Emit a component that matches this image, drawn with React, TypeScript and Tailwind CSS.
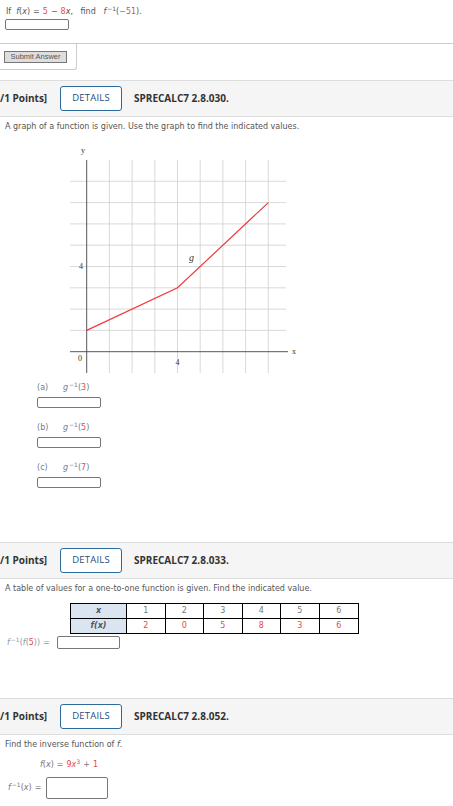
const body = "font-['DejaVu_Sans',Verdana,sans-serif] text-[8px] text-[#555]";
const head = "font-['Open_Sans','Noto_Sans',sans-serif]";
const sup = 'text-[6px] ml-[1px]';

function Red({ children }: { children: React.ReactNode }) {
  return <span className="text-[#e8484a]">{children}</span>;
}

function Op({ children }: { children: React.ReactNode }) {
  return <span className="mx-[3px]">{children}</span>;
}

function Box({ w = 'w-[64px]', h = 'h-[11px]' }: { w?: string; h?: string }) {
  return <div className={`${w} ${h} border border-[#777] rounded-[2px] bg-white`} />;
}

function Header({ code }: { code: string }) {
  return (
    <div className={`${head} flex items-center h-[37px] bg-[#f5f5f5] border-y border-[#dddddd] text-[#333]`}>
      <span className="w-[60px] text-[10px] font-bold">/1 Points]</span>
      <div className="w-[62px] h-[25px] border border-[#2c6a9c] rounded-[3px] bg-white flex items-center justify-center text-[9.5px] text-[#1f4d78] tracking-[0.2px]">
        DETAILS
      </div>
      <span className="ml-[12px] text-[10px] font-bold">{code}</span>
    </div>
  );
}

function Graph() {
  const ox = 26.7;
  const oy = 209.7;
  const ux = 22.7;
  const uy = 21.3;
  const X = (v: number) => ox + v * ux;
  const Y = (v: number) => oy - v * uy;
  const xs = [1, 2, 3, 4, 5, 6, 7, 8];
  return (
    <svg width="242" height="234" className="ml-[60px] mt-[10px] block">
      {xs.map((i) => (
        <line key={'v' + i} x1={X(i)} x2={X(i)} y1={18} y2={231} stroke="#cfcfcf" strokeWidth="0.8" />
      ))}
      {xs.map((j) => (
        <line key={'h' + j} x1={10} x2={226} y1={Y(j)} y2={Y(j)} stroke="#cfcfcf" strokeWidth="0.8" />
      ))}
      <line x1={X(0)} x2={X(0)} y1={18} y2={231} stroke="#444" strokeWidth="0.9" />
      <line x1={10} x2={228} y1={oy} y2={oy} stroke="#444" strokeWidth="0.9" />
      <polyline
        points={`${X(0)},${Y(1)} ${X(4)},${Y(3)} ${X(8)},${Y(7)}`}
        fill="none"
        stroke="#f0393b"
        strokeWidth="1.2"
      />
      <g fontFamily="'Liberation Serif', 'DejaVu Serif', serif" fontSize="8" fill="#333">
        <text x={23} y={11} textAnchor="middle">y</text>
        <text x={232} y={212}>x</text>
        <text x={21} y={127} textAnchor="middle">4</text>
        <text x={20} y={219} textAnchor="middle">0</text>
        <text x={X(4)} y={223} textAnchor="middle">4</text>
        <text x={129} y={119} fontStyle="italic" fontSize="10">g</text>
      </g>
    </svg>
  );
}

function Part({ l, v }: { l: string; v: string }) {
  return (
    <div className="ml-[37px]">
      <div className="flex items-end h-[10px] text-[#6b7c93]">
        <span className="w-[26px]">({l})</span>
        <span>
          <i>g</i>
          <sup className={sup}>−1</sup>(<Red>{v}</Red>)
        </span>
      </div>
      <div className="mt-[3px]">
        <Box w="w-[64px]" h="h-[11px]" />
      </div>
    </div>
  );
}

export default function App() {
  const xs = ['1', '2', '3', '4', '5', '6'];
  const fs = ['2', '0', '5', '8', '3', '6'];
  return (
    <div className={`${body} w-[453px] h-[806px] bg-white overflow-hidden`}>
      <div className="pl-[6px] pt-[7px]">
        <div className="h-[10px] leading-[10px]">
          If&nbsp; <i>f</i>(<i>x</i>)<Op>=</Op>
          <Red>5</Red>
          <Op>−</Op>
          <Red>8</Red>
          <i>x</i>,&nbsp;&nbsp; find&nbsp;&nbsp; <i>f</i>
          <sup className={sup}>−1</sup>(<Red>−51</Red>).
        </div>
      </div>
      <div className="pl-[5px] mt-[2px]">
        <Box w="w-[64px]" h="h-[11px]" />
      </div>
      <div className="mt-[13px] border-t border-[#cccccc]">
        <div className="w-[77px] h-[26px] border-r border-b border-[#cccccc] rounded-br-[3px] pl-[4px] pt-[7px]">
          <div className="w-[63px] h-[12px] bg-[#dedede] border border-[#777] flex items-center justify-center text-[7.5px] text-[#555] font-['Liberation_Sans',Arial,sans-serif]">
            Submit Answer
          </div>
        </div>
      </div>
      <div className="mt-[10px]">
        <Header code="SPRECALC7 2.8.030." />
      </div>
      <div className="pl-[5px] mt-[5px] h-[10px] leading-[10px]">
        A graph of a function is given. Use the graph to find the indicated values.
      </div>
      <Graph />
      <div className="mt-[8px] flex flex-col gap-[16px]">
        <Part l="a" v="3" />
        <Part l="b" v="5" />
        <Part l="c" v="7" />
      </div>
      <div className="mt-[54px]">
        <Header code="SPRECALC7 2.8.033." />
      </div>
      <div className="pl-[5px] mt-[5px] h-[10px] leading-[10px]">
        A table of values for a one-to-one function is given. Find the indicated value.
      </div>
      <div className="ml-[70px] mt-[9px] w-[289px] border border-black grid grid-cols-[56px_repeat(6,1fr)] text-center leading-[14px]">
        <div className="bg-[#dbe5f1] border-r border-b border-black font-bold italic text-[#4a5566]">x</div>
        {xs.map((v, i) => (
          <div key={'x' + v} className={`border-b border-black ${i < 5 ? 'border-r' : ''} text-[#777]`}>
            {v}
          </div>
        ))}
        <div className="bg-[#dbe5f1] border-r border-black font-bold italic text-[#4a5566]">f(x)</div>
        {fs.map((v, i) => (
          <div key={'f' + i} className={`${i < 5 ? 'border-r border-black' : ''} text-[#e8484a]`}>
            {v}
          </div>
        ))}
      </div>
      <div className="flex items-center pl-[7px] mt-[2px] text-[#8a97a8]">
        <span className="w-[50px]">
          <i>f</i>
          <sup className={sup}>−1</sup>(<i>f</i>(<Red>5</Red>))<Op>=</Op>
        </span>
        <Box w="w-[63px]" h="h-[13px]" />
      </div>
      <div className="mt-[49px]">
        <Header code="SPRECALC7 2.8.052." />
      </div>
      <div className="pl-[5px] mt-[5px] h-[10px] leading-[10px]">
        Find the inverse function of <i>f</i>.
      </div>
      <div className="pl-[40px] mt-[10px] h-[10px] leading-[10px] text-[#777]">
        <i>f</i>(<i>x</i>)<Op>=</Op>
        <Red>9</Red>
        <i className="text-[#e8484a]">x</i>
        <sup className="text-[6px]">3</sup>
        <Op>+</Op>
        <Red>1</Red>
      </div>
      <div className="flex items-center pl-[8px] mt-[7px] text-[#777]">
        <span className="w-[38px]">
          <i>f</i>
          <sup className={sup}>−1</sup>(<i>x</i>)<Op>=</Op>
        </span>
        <Box w="w-[62px]" h="h-[22px]" />
      </div>
    </div>
  );
}
